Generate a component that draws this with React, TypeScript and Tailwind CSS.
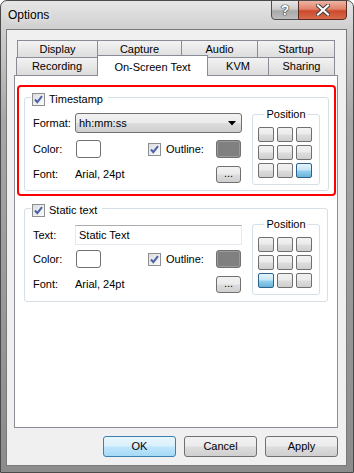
import type { ReactNode } from 'react';

const btnFace =
  'bg-[linear-gradient(#f2f2f2_0%,#ebebeb_48%,#dddddd_52%,#cfcfcf_100%)] border border-[#707070]';

function Check() {
  return (
    <span className="flex h-[13px] w-[13px] shrink-0 items-center justify-center border border-[#8e8f8f] bg-[linear-gradient(135deg,#dcdee2,#fbfbfb)]">
      <svg width="11" height="11" viewBox="0 0 11 11">
        <path d="M2 5.5 L4.3 8.2 L9 2.2" fill="none" stroke="#4c62a6" strokeWidth="2" />
      </svg>
    </span>
  );
}

function GroupBox({ legend, className, children }: { legend: ReactNode; className: string; children: ReactNode }) {
  return (
    <div className={`relative rounded-[3px] border border-[#d5dfe5] ${className}`}>
      <div className="absolute left-[6px] top-[-7px] flex items-center gap-[4px] bg-white px-[1px] pr-[5px]">
        {legend}
      </div>
      {children}
    </div>
  );
}

function PositionBox({ selected, top }: { selected: number; top: string }) {
  return (
    <div className={`relative h-[71px] w-[68px] shrink-0 rounded-[3px] border border-[#d5dfe5] ${top}`}>
      <div className="absolute left-1/2 top-[-8px] -translate-x-1/2 bg-white px-[2px] leading-[14px]">Position</div>
      <div className="grid w-fit grid-cols-3 gap-[3px] pl-[5px] pt-[12px]">
        {Array.from({ length: 9 }).map((_, i) => (
          <span
            key={i}
            className={
              i === selected
                ? 'h-[15px] w-[16px] rounded-[2px] border border-[#2c628b] bg-[linear-gradient(#e5f4fc_0%,#c4e5f6_48%,#98d1ef_52%,#68b3db_100%)]'
                : `h-[15px] w-[16px] rounded-[2px] ${btnFace}`
            }
          />
        ))}
      </div>
    </div>
  );
}

function Swatch({ dark, className = '' }: { dark?: boolean; className?: string }) {
  return (
    <span
      className={`block h-[18px] w-[25px] shrink-0 rounded-[3px] border border-[#707070] ${className} ${dark ? 'bg-[#808080] shadow-[inset_0_0_0_1px_#9a9a9a]' : 'bg-white'}`}
    />
  );
}

function Dots() {
  return (
    <span className={`ml-auto mr-[1px] flex h-[17px] w-[25px] items-end justify-center rounded-[3px] pb-[3px] leading-none ${btnFace}`}>
      ...
    </span>
  );
}

function FieldRows({ first, gap1 }: { first: ReactNode; gap1: string }) {
  return (
    <div className="w-[209px] shrink-0">
      {first}
      <div className={`flex h-[18px] items-center ${gap1}`}>
        <span className="w-[43px]">Color:</span>
        <Swatch />
        <span className="ml-[47px]">
          <Check />
        </span>
        <span className="ml-[5px]">Outline:</span>
        <Swatch dark className="ml-auto mr-[1px]" />
      </div>
      <div className="mt-[8px] flex h-[17px] items-center">
        <span className="w-[42px]">Font:</span>
        <span>Arial, 24pt</span>
        <Dots />
      </div>
    </div>
  );
}

const rowTabs = [
  { label: 'Display', w: 'w-[81px]' },
  { label: 'Capture', w: 'w-[85px]' },
  { label: 'Audio', w: 'w-[77px]' },
  { label: 'Startup', w: 'w-[78px]' },
];

const frontTabs = [
  { label: 'Recording', w: 'w-[82px]' },
  { label: 'On-Screen Text', w: 'w-[111px]', active: true },
  { label: 'KVM', w: 'w-[62px]' },
  { label: 'Sharing', w: 'w-[67px]' },
];

const tabFace = 'bg-[linear-gradient(#f3f3f3,#dcdcdc)] border border-b-0 border-[#898c95]';

export default function App() {
  return (
    <div className="h-[473px] w-[354px] overflow-hidden rounded-t-[7px] border border-[#4a4a4a] bg-[linear-gradient(180deg,#e6e6e6_0px,#cfcfcf_28px,#a6a6a6_120px,#8c8c8c_100%)] font-['Liberation_Sans',Arial,sans-serif] text-[11px] text-black">
      <div className="flex h-[28px] items-start">
        <span className="ml-[7px] mt-[6px] text-[12px] leading-[16px] [text-shadow:0_0_6px_#fff]">Options</span>
        <div className="ml-auto mr-[6px] flex -mt-px">
          <span className="flex h-[20px] w-[28px] items-center justify-center rounded-bl-[4px] border border-[#4f4f4f] bg-[linear-gradient(#e8e8e8_0%,#cdcdcd_45%,#a9a9a9_55%,#bdbdbd_100%)] text-[14px] font-bold leading-none text-white [text-shadow:0_0_1px_#222,0_0_1px_#222,0_0_1px_#222]">
            ?
          </span>
          <span className="-ml-px flex h-[20px] w-[49px] items-center justify-center rounded-br-[4px] border border-[#5a2a20] bg-[linear-gradient(#eeb4a4_0%,#e0826a_45%,#cc4a2c_55%,#d86a4c_100%)]">
            <svg width="14" height="12" viewBox="0 0 14 12">
              <path d="M2 1.5 L12 10.5 M12 1.5 L2 10.5" stroke="#3a3a3a" strokeWidth="4" strokeLinecap="square" />
              <path d="M2 1.5 L12 10.5 M12 1.5 L2 10.5" stroke="#ffffff" strokeWidth="2.2" strokeLinecap="square" />
            </svg>
          </span>
        </div>
      </div>

      <div className="ml-[5px] h-[437px] w-[341px] border border-[#7a7a7a] bg-[#f0f0f0] pt-[10px]">
        <div className="ml-[7px] w-[324px]">
          <div className="ml-[3px] flex h-[18px]">
            {rowTabs.map((t, i) => (
              <div key={t.label} className={`${t.w} ${i ? '-ml-px' : ''} flex h-[18px] items-center justify-center ${tabFace}`}>
                {t.label}
              </div>
            ))}
          </div>
          <div className="-mt-px ml-[2px] flex h-[18px] items-start">
            {frontTabs.map((t, i) =>
              t.active ? (
                <div
                  key={t.label}
                  className={`${t.w} relative z-10 -ml-px -mt-[2px] flex h-[21px] items-start justify-center border border-b-0 border-[#898c95] bg-white pt-[3px]`}
                >
                  {t.label}
                </div>
              ) : (
                <div key={t.label} className={`${t.w} ${i ? '-ml-px' : ''} flex h-[18px] items-center justify-center ${tabFace}`}>
                  {t.label}
                </div>
              ),
            )}
          </div>

          <div className="h-[353px] border border-[#898c95] bg-white">
            <div className="ml-[2px] mr-px mt-[9px] h-[111px] rounded-[4px] border-2 border-[#ff0000] px-[5px] pt-[10px]">
              <GroupBox
                className="h-[94px]"
                legend={
                  <>
                    <Check />
                    <span>Timestamp</span>
                  </>
                }
              >
                <div className="flex items-start pl-[8px]">
                  <FieldRows
                    gap1="mt-[7px]"
                    first={
                      <div className="mt-[15px] flex h-[20px] items-center">
                        <span className="w-[42px]">Format:</span>
                        <div className="flex h-[20px] w-[167px] items-center justify-between rounded-[3px] border border-[#707070] bg-[linear-gradient(#f2f2f2_0%,#ebebeb_48%,#dddddd_52%,#cfcfcf_100%)] pl-[3px] pr-[5px]">
                          <span>hh:mm:ss</span>
                          <svg width="8" height="5" viewBox="0 0 8 5">
                            <path d="M0 0 H8 L4 4.5 Z" fill="#000" />
                          </svg>
                        </div>
                      </div>
                    }
                  />
                  <div className="ml-[10px]">
                    <PositionBox selected={8} top="mt-[16px]" />
                  </div>
                </div>
              </GroupBox>
            </div>

            <div className="ml-[9px] mt-[12px] w-[304px]">
              <GroupBox
                className="h-[94px]"
                legend={
                  <>
                    <Check />
                    <span>Static text</span>
                  </>
                }
              >
                <div className="flex items-start pl-[8px]">
                  <FieldRows
                    gap1="mt-[5px]"
                    first={
                      <div className="mt-[16px] flex h-[20px] items-center">
                        <span className="w-[42px]">Text:</span>
                        <div className="flex h-[20px] w-[167px] items-center border border-[#e3e9ef] border-t-[#abadb3] bg-white pl-[3px]">
                          Static Text
                        </div>
                      </div>
                    }
                  />
                  <div className="ml-[10px]">
                    <PositionBox selected={6} top="mt-[15px]" />
                  </div>
                </div>
              </GroupBox>
            </div>
          </div>
        </div>

        <div className="mr-[8px] mt-[8px] flex justify-end gap-[8px]">
          <span className="flex h-[21px] w-[73px] items-center justify-center rounded-[3px] border border-[#3c7fb1] bg-[linear-gradient(#eaf6fd_0%,#d9f0fc_48%,#bee6fd_52%,#a7d9f5_100%)]">
            OK
          </span>
          <span className={`flex h-[21px] w-[73px] items-center justify-center rounded-[3px] ${btnFace}`}>Cancel</span>
          <span className={`flex h-[21px] w-[73px] items-center justify-center rounded-[3px] ${btnFace}`}>Apply</span>
        </div>
      </div>
    </div>
  );
}
